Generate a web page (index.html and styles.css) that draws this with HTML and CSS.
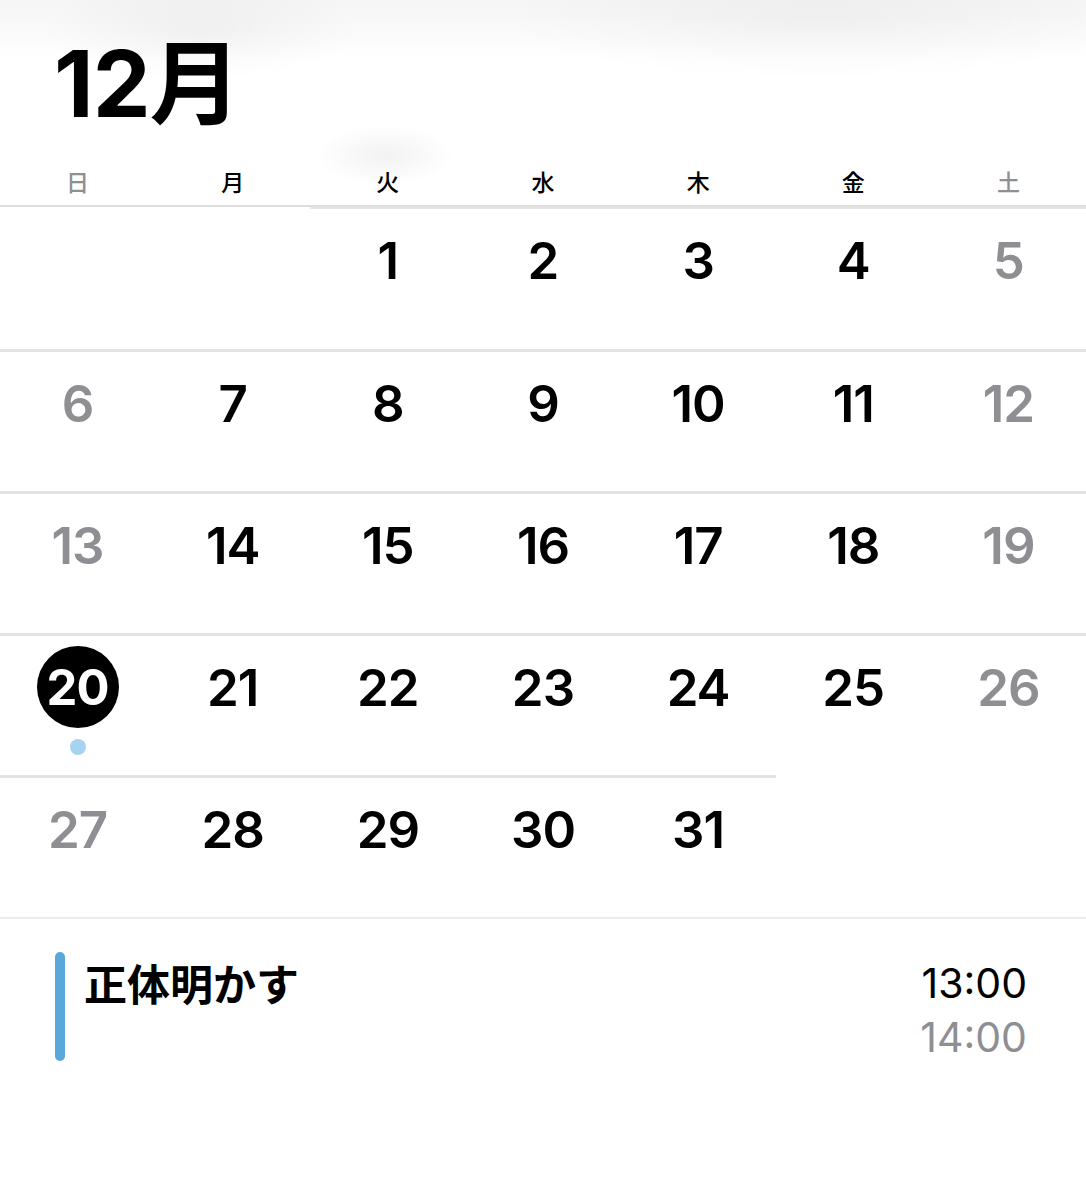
FILE: index.html
```html
<!DOCTYPE html>
<html lang="ja">
<head>
<meta charset="utf-8">
<title>12月</title>
<link rel="stylesheet" href="styles.css">
</head>
<body>
<div class="screen">
  <header class="month-header">
    <h1 class="month-title">12月</h1>
    <div class="weekdays">
      <span class="wd off">日</span>
      <span class="wd">月</span>
      <span class="wd">火</span>
      <span class="wd">水</span>
      <span class="wd">木</span>
      <span class="wd">金</span>
      <span class="wd off">土</span>
    </div>
  </header>

  <section class="weeks">
    <div class="week">
      <div class="cell empty"></div>
      <div class="cell empty"></div>
      <div class="cell"><span class="num">1</span></div>
      <div class="cell"><span class="num">2</span></div>
      <div class="cell"><span class="num">3</span></div>
      <div class="cell"><span class="num">4</span></div>
      <div class="cell"><span class="num off">5</span></div>
    </div>
    <div class="week">
      <div class="cell"><span class="num off">6</span></div>
      <div class="cell"><span class="num">7</span></div>
      <div class="cell"><span class="num">8</span></div>
      <div class="cell"><span class="num">9</span></div>
      <div class="cell"><span class="num">10</span></div>
      <div class="cell"><span class="num">11</span></div>
      <div class="cell"><span class="num off">12</span></div>
    </div>
    <div class="week">
      <div class="cell"><span class="num off">13</span></div>
      <div class="cell"><span class="num">14</span></div>
      <div class="cell"><span class="num">15</span></div>
      <div class="cell"><span class="num">16</span></div>
      <div class="cell"><span class="num">17</span></div>
      <div class="cell"><span class="num">18</span></div>
      <div class="cell"><span class="num off">19</span></div>
    </div>
    <div class="week">
      <div class="cell"><span class="num today">20</span><span class="dot"></span></div>
      <div class="cell"><span class="num">21</span></div>
      <div class="cell"><span class="num">22</span></div>
      <div class="cell"><span class="num">23</span></div>
      <div class="cell"><span class="num">24</span></div>
      <div class="cell"><span class="num">25</span></div>
      <div class="cell"><span class="num off">26</span></div>
    </div>
    <div class="week">
      <div class="cell"><span class="num off">27</span></div>
      <div class="cell"><span class="num">28</span></div>
      <div class="cell"><span class="num">29</span></div>
      <div class="cell"><span class="num">30</span></div>
      <div class="cell"><span class="num">31</span></div>
      <div class="cell empty"></div>
      <div class="cell empty"></div>
    </div>
  </section>

  <section class="events">
    <div class="event">
      <div class="event-bar"></div>
      <div class="event-title">正体明かす</div>
      <div class="event-times">
        <div class="time-start">13:00</div>
        <div class="time-end">14:00</div>
      </div>
    </div>
  </section>
</div>
</body>
</html>
```

FILE: styles.css
```css
* {
  box-sizing: border-box;
}

html, body {
  margin: 0;
  padding: 0;
  background: #ffffff;
}

body {
  font-family: Inter, "Noto Sans CJK JP", sans-serif;
  color: #000;
}

.screen {
  width: 1086px;
  min-height: 1200px;
  background:
    radial-gradient(ellipse 70px 30px at 385px 155px, rgba(0,0,0,0.05), rgba(0,0,0,0) 100%),
    radial-gradient(ellipse 160px 50px at 200px 30px, rgba(0,0,0,0.04), rgba(0,0,0,0) 100%),
    radial-gradient(ellipse 320px 60px at 820px 20px, rgba(0,0,0,0.035), rgba(0,0,0,0) 100%),
    linear-gradient(to bottom, #f5f5f5 0px, #ffffff 60px);
}

.month-header {
  display: flex;
  flex-direction: column;
}

.month-title {
  margin: 0;
  padding: 34px 0 0 54px;
  height: 161px;
  font-family: Inter, "Noto Sans CJK JP", sans-serif;
  font-weight: 700;
  font-size: 92px;
  line-height: 100px;
  letter-spacing: -1px;
}

.weekdays {
  display: grid;
  grid-template-columns: repeat(7, 1fr);
  height: 46px;
  border-bottom: 2px solid #dedede;
}

.wd {
  text-align: center;
  font-family: "Noto Sans CJK JP", sans-serif;
  font-weight: 500;
  font-size: 23px;
  line-height: 40px;
  color: #000;
}

.wd.off {
  color: #8e8e93;
}

.weeks {
  display: flex;
  flex-direction: column;
}

.week {
  display: grid;
  grid-template-columns: repeat(7, 1fr);
  height: 142px;
}

.cell {
  display: flex;
  flex-direction: column;
  align-items: center;
  border-top: 3px solid #e3e3e3;
}

.week:first-child .cell {
  border-top-width: 2px;
}

.cell.empty {
  border-top-color: transparent;
}

.num {
  display: flex;
  align-items: center;
  justify-content: center;
  width: 82px;
  height: 82px;
  margin-top: 10px;
  border-radius: 50%;
  font-family: Inter, sans-serif;
  font-weight: 600;
  font-size: 51px;
  letter-spacing: -1px;
  color: #000;
}

.num.off {
  color: #8e8e93;
}

.num.today {
  background: #000;
  color: #fff;
  font-weight: 700;
  font-size: 49px;
}

.dot {
  width: 16px;
  height: 16px;
  margin-top: 11px;
  border-radius: 50%;
  background: #a6d3ef;
}

.events {
  border-top: 2px solid #ececec;
  padding: 33px 59px 0 55px;
}

.event {
  display: flex;
  align-items: flex-start;
}

.event-bar {
  width: 10px;
  height: 109px;
  border-radius: 5px;
  background: #5aa8da;
  flex: none;
}

.event-title {
  margin-left: 19px;
  margin-top: 4px;
  font-family: "Noto Sans CJK JP", sans-serif;
  font-weight: 600;
  font-size: 43px;
  line-height: 52px;
  flex: 1;
}

.event-times {
  display: flex;
  flex-direction: column;
  align-items: flex-end;
  margin-top: 4px;
  font-family: Inter, sans-serif;
  font-weight: 400;
  font-size: 41px;
  line-height: 54px;
}

.time-end {
  color: #8e8e93;
}
```
